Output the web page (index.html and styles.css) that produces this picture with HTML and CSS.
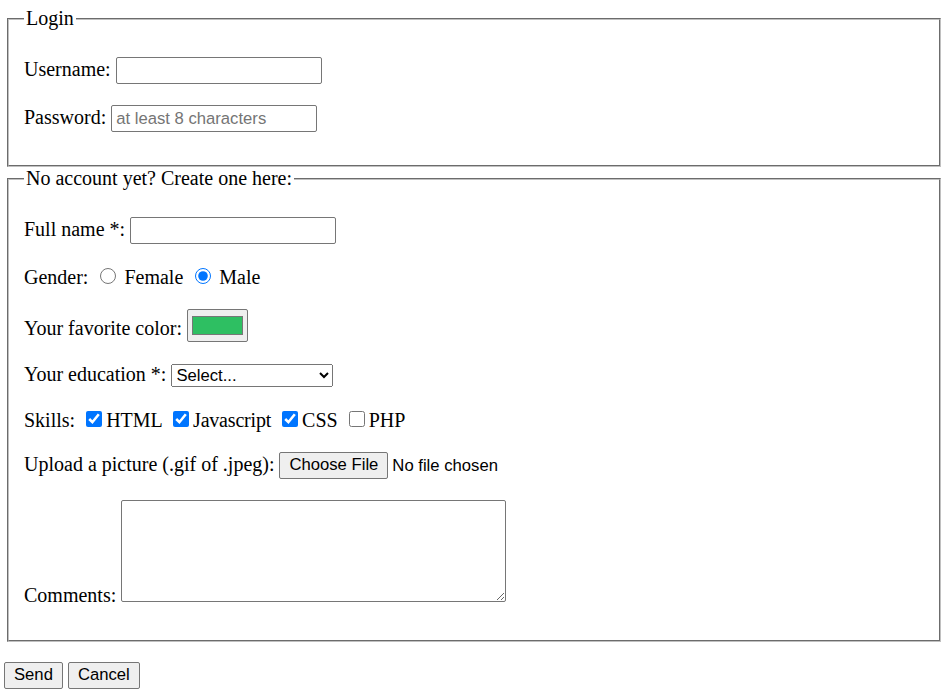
FILE: index.html
```html
<!DOCTYPE html>
<html lang="en">
<head>
<meta charset="utf-8">
<title>Registration form</title>
<link rel="stylesheet" href="styles.css">
</head>
<body class="page">
<form class="form">
  <fieldset class="group">
    <legend class="group-title">Login</legend>
    <p class="row"><label for="username">Username:</label> <input class="text-field" type="text" id="username" name="username"></p>
    <p class="row"><label for="password">Password:</label> <input class="text-field" type="password" id="password" name="password" placeholder="at least 8 characters"></p>
  </fieldset>
  <fieldset class="group group-signup">
    <legend class="group-title">No account yet? Create one here:</legend>
    <p class="row"><label for="fullname">Full name *:</label> <input class="text-field" type="text" id="fullname" name="fullname"></p>
    <p class="row">Gender: <input class="choice choice-radio" type="radio" name="gender" id="female" value="female"> <label for="female">Female</label> <input class="choice choice-radio" type="radio" name="gender" id="male" value="male" checked> <label for="male">Male</label></p>
    <p class="row"><label for="color">Your favorite color:</label> <input class="color-field" type="color" id="color" name="color" value="#2ebf62"></p>
    <p class="row"><label for="education">Your education *:</label> <select class="select-field" id="education" name="education">
      <option>Select...</option>
      <option>High school</option>
      <option>Bachelor</option>
      <option>Master</option>
      <option>PhD</option>
    </select></p>
    <p class="row">Skills: <input class="choice" type="checkbox" id="html" name="skills" value="html" checked><label for="html">HTML</label> <input class="choice" type="checkbox" id="js" name="skills" value="js" checked><label class="skill-tight" for="js">Javascript</label> <input class="choice" type="checkbox" id="css" name="skills" value="css" checked><label for="css">CSS</label> <input class="choice" type="checkbox" id="php" name="skills" value="php"><label for="php">PHP</label></p>
    <p class="row"><label for="picture">Upload a picture (.gif of .jpeg):</label> <input class="file-field" type="file" id="picture" name="picture" accept=".gif,.jpeg"></p>
    <p class="row"><label for="comments">Comments:</label> <textarea class="comment-field" id="comments" name="comments"></textarea></p>
  </fieldset>
  <p class="actions"><button class="btn" type="submit">Send</button> <button class="btn" type="reset">Cancel</button></p>
</form>
</body>
</html>
```

FILE: styles.css
```css
html {
  background: #ffffff;
}

.page {
  margin: 0;
  padding: 7px 6px 0 4px;
  font-family: "Liberation Serif", "Times New Roman", serif;
  font-size: 20px;
  color: #000000;
}

.form {
  margin: 0;
}

.group {
  margin: 0 3px;
  padding: 7px 15px 12px;
  border: 2px groove #c0c0c0;
  min-width: 0;
}

.group-signup {
  padding-bottom: 13px;
}

.group-title {
  padding: 0 2px;
}

.row {
  margin: 20px 0;
}

.skill-tight {
  letter-spacing: -0.2px;
}

.text-field {
  box-sizing: border-box;
  width: 206px;
  height: 27px;
  margin: 0 0 1px;
  padding: 0 4px;
  border: 1px solid #767676;
  border-radius: 2px;
  font: 16.667px "Liberation Sans", Arial, sans-serif;
  color: #000000;
  background: #ffffff;
}

.text-field::placeholder {
  color: #757575;
}

.choice {
  width: 16px;
  height: 16px;
  margin: 3.75px 3.75px 0 6.25px;
}

.choice-radio {
  margin-top: 2.75px;
}

.color-field {
  box-sizing: border-box;
  width: 61px;
  height: 33px;
  margin: 0 0 1px;
  padding: 1px 2px;
  border: 1px solid #767676;
  border-radius: 2px;
  background: #efefef;
}

.color-field::-webkit-color-swatch-wrapper {
  padding: 5px 2px;
}

.color-field::-webkit-color-swatch {
  border: 1px solid #777777;
}

.select-field {
  box-sizing: border-box;
  width: 162px;
  height: 23px;
  margin: 0;
  font: 16.667px "Liberation Sans", Arial, sans-serif;
  color: #000000;
}

.file-field {
  margin: 0 0 1px;
  font: 16.667px "Liberation Sans", Arial, sans-serif;
  color: #000000;
}

.file-field::file-selector-button {
  box-sizing: border-box;
  height: 27px;
  margin: 0 4px 0 0;
  padding: 0 9px;
  border: 1px solid #767676;
  border-radius: 2px;
  background: #efefef;
  font: inherit;
  color: #000000;
}

.comment-field {
  box-sizing: border-box;
  width: 385px;
  height: 102px;
  margin: 0;
  border: 1px solid #767676;
  border-radius: 2px;
  font: 13.333px "Liberation Mono", monospace;
}

.actions {
  margin: 20px 0 0;
}

.btn {
  box-sizing: border-box;
  height: 27px;
  margin: 0;
  padding: 0 9px;
  border: 1px solid #767676;
  border-radius: 2px;
  background: #efefef;
  font: 16.667px "Liberation Sans", Arial, sans-serif;
  color: #000000;
}
```
